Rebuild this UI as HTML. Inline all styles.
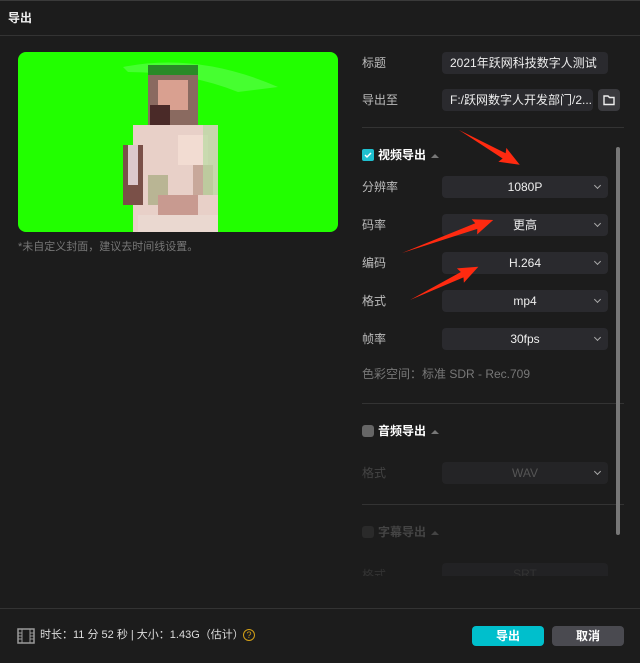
<!DOCTYPE html>
<html><head><meta charset="utf-8"><style>
*{margin:0;padding:0;box-sizing:border-box}
body{width:640px;height:663px;background:#1c1c1c;font-family:"Liberation Sans","Noto Sans CJK SC",sans-serif;color:#ddd;font-size:12px;position:relative;overflow:hidden}
.a{position:absolute}
.lbl{position:absolute;left:362px;color:#bbb;font-size:12px;line-height:14px}
.dd{position:absolute;left:442px;width:166px;height:22px;background:#2a2a2e;border-radius:4px;color:#eee;text-align:center;line-height:22px;font-size:12px}
.dd:after{content:"";position:absolute;right:8px;top:7px;width:4px;height:4px;border-right:1.5px solid #aaa;border-bottom:1.5px solid #aaa;transform:rotate(45deg)}
.sep{position:absolute;left:362px;width:262px;height:1px;background:#333}
.hd{position:absolute;left:378px;font-weight:bold;color:#fff;font-size:12px;line-height:14px}
.tri{display:inline-block;margin-left:5px;border-left:4px solid transparent;border-right:4px solid transparent;border-bottom:4px solid #777;vertical-align:middle}
</style></head><body>
<div class="a" style="left:0;top:0;width:640px;height:1px;background:#3a3a3a"></div>
<div class="a" style="left:8px;top:11px;font-size:12px;color:#eee;font-weight:bold;line-height:14px">导出</div>
<div class="a" style="left:0;top:35px;width:640px;height:1px;background:#333"></div>
<svg class="a" style="left:18px;top:52px" width="320" height="180">
<defs><clipPath id="c"><rect width="320" height="180" rx="8"/></clipPath></defs>
<g clip-path="url(#c)">
<rect width="320" height="180" fill="#22ff00"/>
<path d="M105 15 Q180 0 260 35 L220 40 Q170 20 110 20Z" fill="#55ff44" opacity=".7"/>
<rect x="130" y="13" width="50" height="30" fill="#2a8a28"/>
<rect x="130" y="23" width="50" height="80" fill="#8a6a60"/>
<rect x="140" y="28" width="30" height="30" fill="#d9a090"/>
<rect x="132" y="53" width="20" height="20" fill="#4a2a28"/>
<rect x="115" y="73" width="85" height="107" fill="#e8d0c8"/>
<rect x="105" y="93" width="20" height="60" fill="#7a5048"/>
<rect x="110" y="93" width="10" height="40" fill="#dcc8cc"/>
<rect x="130" y="123" width="20" height="30" fill="#8a9a60" opacity=".5"/>
<rect x="160" y="83" width="30" height="30" fill="#f2dcd2"/>
<rect x="140" y="143" width="40" height="20" fill="#c89a90"/>
<rect x="175" y="113" width="20" height="30" fill="#c8a89a"/>
<rect x="185" y="73" width="15" height="70" fill="#b8d8a0" opacity=".7"/>
<rect x="120" y="163" width="80" height="17" fill="#ead8d0"/>
</g></svg>
<div class="a" style="left:18px;top:241px;color:#777;font-size:11px;line-height:13px">*未自定义封面，建议去时间线设置。</div>

<div class="lbl" style="top:56px">标题</div>
<div class="a" style="left:442px;top:52px;width:166px;height:22px;background:#2a2a2e;border-radius:4px;line-height:22px;padding-left:8px;color:#eee">2021年跃网科技数字人测试</div>
<div class="lbl" style="top:93px">导出至</div>
<div class="a" style="left:442px;top:89px;width:151px;height:22px;background:#2a2a2e;border-radius:4px;line-height:22px;padding-left:8px;color:#eee;white-space:nowrap;overflow:hidden">F:/跃网数字人开发部门/2...</div>
<div class="a" style="left:598px;top:89px;width:22px;height:22px;background:#3a3a3e;border-radius:4px"><svg width="22" height="22"><path d="M6 7h4l1.5 1.5H16v7H6z" fill="none" stroke="#eee" stroke-width="1.4"/></svg></div>
<div class="sep" style="top:127px"></div>

<div class="a" style="left:362px;top:149px;width:12px;height:12px;background:#1fc0d0;border-radius:2px"><svg width="12" height="12"><path d="M3 6l2 2 4-4" stroke="#fff" stroke-width="1.5" fill="none"/></svg></div>
<div class="hd" style="top:148px">视频导出<span class="tri"></span></div>
<div class="lbl" style="top:180px">分辨率</div><div class="dd" style="top:176px">1080P</div>
<div class="lbl" style="top:218px">码率</div><div class="dd" style="top:214px">更高</div>
<div class="lbl" style="top:256px">编码</div><div class="dd" style="top:252px">H.264</div>
<div class="lbl" style="top:294px">格式</div><div class="dd" style="top:290px">mp4</div>
<div class="lbl" style="top:332px">帧率</div><div class="dd" style="top:328px">30fps</div>
<div class="lbl" style="top:367px;color:#777">色彩空间：标准 SDR - Rec.709</div>
<div class="sep" style="top:403px"></div>

<div class="a" style="left:362px;top:425px;width:12px;height:12px;background:#666;border-radius:3px"></div>
<div class="hd" style="top:424px">音频导出<span class="tri"></span></div>
<div class="lbl" style="top:466px;color:#444">格式</div><div class="dd" style="top:462px;background:#242426;color:#555">WAV</div>
<div class="sep" style="top:504px"></div>
<div class="a" style="left:362px;top:526px;width:12px;height:12px;background:#2a2a2a;border-radius:3px"></div>
<div class="hd" style="top:525px;color:#444">字幕导出<span class="tri" style="border-bottom-color:#444"></span></div>
<div class="a" style="left:362px;top:560px;width:262px;height:16px;overflow:hidden">
<div style="position:absolute;left:0;top:6px;color:#333">格式</div>
<div style="position:absolute;left:80px;top:3px;width:166px;height:22px;background:#222224;border-radius:4px;color:#333;text-align:center;line-height:22px">SRT</div></div>

<div class="a" style="left:616px;top:147px;width:4px;height:388px;background:#777;border-radius:2px"></div>

<svg class="a" style="left:0;top:0" width="640" height="663">
<g fill="#ff2a10">
<polygon transform="translate(459,130) rotate(29.8)" points="0,0 52,-3 50,-8 70,0 50,8 52,3"/>
<polygon transform="translate(402,253) rotate(-19.9)" points="0,0 79,-3 77,-8 97,0 77,8 79,3"/>
<polygon transform="translate(410,300) rotate(-25.9)" points="0,0 58,-3 56,-8 76,0 56,8 58,3"/>
</g></svg>

<div class="a" style="left:0;top:608px;width:640px;height:1px;background:#333"></div>
<svg class="a" style="left:17px;top:628px" width="18" height="16"><rect x="1" y="1" width="16" height="14" fill="none" stroke="#999" stroke-width="1.5"/><path d="M5 1v14M13 1v14M1 5h4M1 8h4M1 11h4M13 5h4M13 8h4M13 11h4" stroke="#999"/></svg>
<div class="a" style="left:40px;top:629px;color:#ddd;font-size:11px;line-height:13px;white-space:nowrap">时长：11 分 52 秒 | 大小：1.43G（估计）</div>
<div class="a" style="left:243px;top:629px;width:12px;height:12px;border:1.3px solid #d4a017;border-radius:50%;color:#d4a017;font-size:9px;text-align:center;line-height:10px">?</div>
<div class="a" style="left:472px;top:626px;width:72px;height:20px;background:#00bfcc;border-radius:4px;color:#fff;font-weight:bold;text-align:center;line-height:20px">导出</div>
<div class="a" style="left:552px;top:626px;width:72px;height:20px;background:#4a4a50;border-radius:4px;color:#fff;font-weight:bold;text-align:center;line-height:20px">取消</div>
</body></html>
